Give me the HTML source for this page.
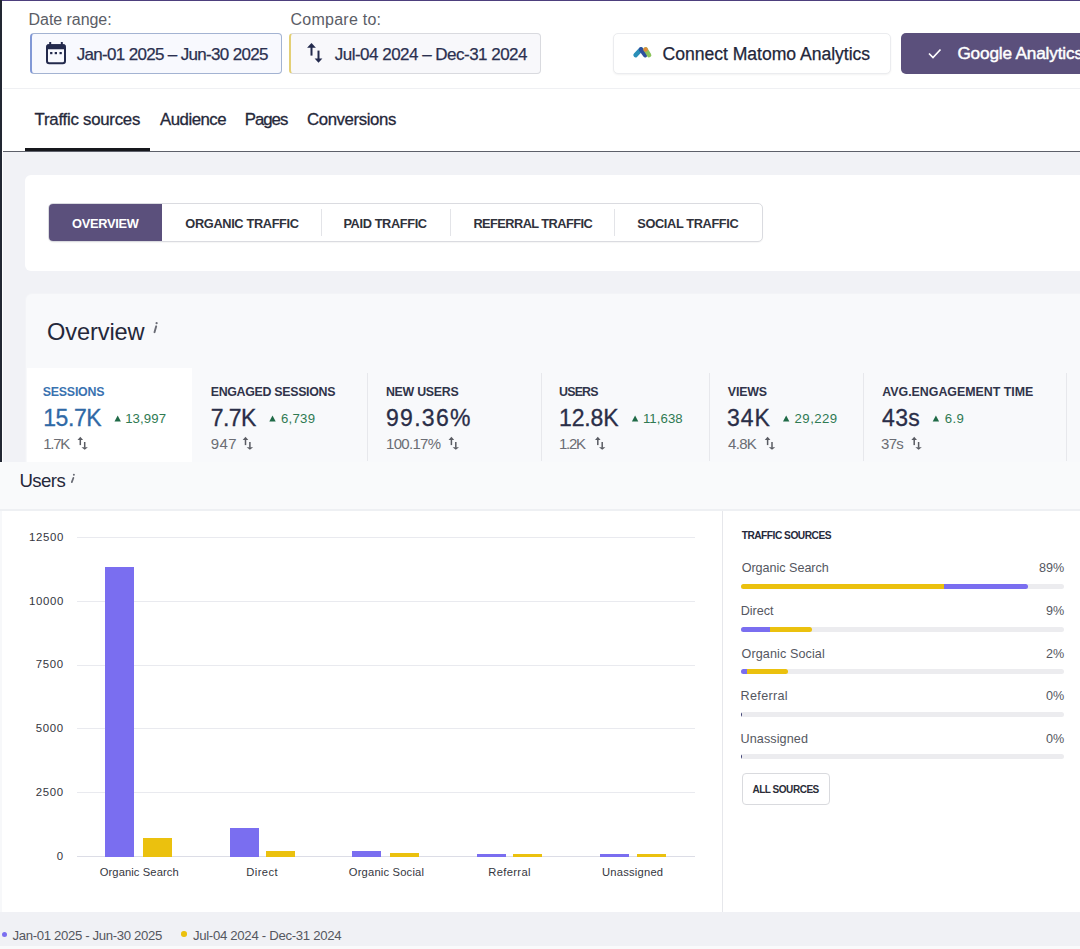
<!DOCTYPE html>
<html><head><meta charset="utf-8"><title>Traffic sources</title>
<style>
*{box-sizing:border-box;margin:0;padding:0}
html,body{width:1080px;height:949px;overflow:hidden;background:#fff;font-family:"Liberation Sans",sans-serif;position:relative}
.r{position:absolute}
.t{position:absolute;white-space:nowrap;line-height:1}
</style></head><body>
<div class="r" style="left:0px;top:0px;width:1080px;height:152px;background:#fff;"></div>
<div class="r" style="left:0px;top:0px;width:1080px;height:1px;background:#4d3f7d;"></div>
<div class="r" style="left:3px;top:88px;width:1077px;height:1px;background:#eff0f3;"></div>
<div class="t" style="left:28.6px;top:12.0px;font-size:16px;letter-spacing:-0.06px;color:#5b5d66">Date range:</div>
<div class="t" style="left:290.5px;top:12.0px;font-size:16px;letter-spacing:0.25px;color:#5b5d66">Compare to:</div>
<div class="r" style="left:30px;top:33px;width:252px;height:41px;border:1.5px solid #a3b3d2;border-left:2px solid #8299d6;border-radius:4px;background:#f8f9fe"></div>
<div class="r" style="left:289px;top:33px;width:252px;height:41px;border:1.5px solid #d9dadf;border-left:2px solid #e3cf75;border-radius:4px;background:#f8f8fb"></div>
<svg class="r" style="left:0;top:0" width="1080" height="100" viewBox="0 0 1080 100">
<rect x="47" y="45.2" width="18" height="18" rx="2.2" fill="none" stroke="#232a4d" stroke-width="2"/>
<rect x="46.5" y="44.2" width="19" height="5" rx="1.5" fill="#232a4d"/>
<rect x="49.2" y="42" width="2" height="3" fill="#232a4d"/><rect x="60.8" y="42" width="2" height="3" fill="#232a4d"/>
<rect x="50.1" y="52" width="2.3" height="2.2" fill="#232a4d"/><rect x="54.7" y="52" width="2.3" height="2.2" fill="#232a4d"/><rect x="59.5" y="52" width="2.3" height="2.2" fill="#232a4d"/>
<path d="M311.5 55.6V47" stroke="#232a4d" stroke-width="2"/><path d="M307.1 47.7L311.5 43.1L315.9 47.7Z" fill="#232a4d"/>
<path d="M318.5 50.6V59" stroke="#232a4d" stroke-width="2"/><path d="M314.6 58.4L318.5 62.8L322.4 58.4Z" fill="#232a4d"/>
<path d="M635.6 55.1L641 49.4" stroke="#2a8fb8" stroke-width="4.5" stroke-linecap="round"/>
<path d="M641 49.4L645.2 55.1" stroke="#2d4f9e" stroke-width="4.5" stroke-linecap="round"/>
<path d="M645.6 49.4L649.1 55.1" stroke="#8bc35a" stroke-width="4.5" stroke-linecap="round"/>
<circle cx="645.6" cy="49.5" r="2.25" fill="#e08a3a"/>
<path d="M929 53.5L933 57.5L940.5 49.5" fill="none" stroke="#fff" stroke-width="1.7"/>
</svg>
<div class="t" style="left:76.7px;top:46.0px;font-size:17px;letter-spacing:-0.675px;color:#2b3050;-webkit-text-stroke:0.25px #2b3050">Jan-01 2025 – Jun-30 2025</div>
<div class="t" style="left:334.8px;top:46.0px;font-size:17px;letter-spacing:-0.517px;color:#2b3050;-webkit-text-stroke:0.25px #2b3050">Jul-04 2024 – Dec-31 2024</div>
<div class="r" style="left:613px;top:33px;width:278px;height:41px;border:1px solid #ebecef;border-radius:5px;background:#fff;box-shadow:0 1px 2px rgba(0,0,0,.05)"></div>
<div class="r" style="left:901px;top:33px;width:200px;height:41px;background:#5b507c;border-radius:5px"></div>
<svg class="r" style="left:0;top:0" width="1080" height="100" viewBox="0 0 1080 100">
<path d="M635.6 55.1L641 49.4" stroke="#2a8fb8" stroke-width="4.5" stroke-linecap="round"/>
<path d="M641 49.4L645.2 55.1" stroke="#2d4f9e" stroke-width="4.5" stroke-linecap="round"/>
<path d="M645.6 49.4L649.1 55.1" stroke="#8bc35a" stroke-width="4.5" stroke-linecap="round"/>
<circle cx="645.6" cy="49.5" r="2.25" fill="#e08a3a"/>
<path d="M929 53.5L933 57.5L940.5 49.5" fill="none" stroke="#fff" stroke-width="1.7"/>
</svg>
<div class="t" style="left:662.5px;top:46.0px;font-size:17.6px;letter-spacing:-0.03px;color:#23263a;-webkit-text-stroke:0.25px #23263a">Connect Matomo Analytics</div>
<div class="t" style="left:957.4px;top:45.0px;font-size:17.2px;letter-spacing:-0.16px;color:#fff;-webkit-text-stroke:0.45px #fff">Google Analytics</div>
<div class="t" style="left:34.6px;top:112.0px;font-size:16.8px;letter-spacing:-0.243px;color:#25283a;-webkit-text-stroke:0.3px #25283a">Traffic sources</div>
<div class="t" style="left:160.1px;top:112.0px;font-size:16.8px;letter-spacing:-0.5px;color:#25283a;-webkit-text-stroke:0.3px #25283a">Audience</div>
<div class="t" style="left:244.8px;top:112.0px;font-size:16.8px;letter-spacing:-1.025px;color:#25283a;-webkit-text-stroke:0.3px #25283a">Pages</div>
<div class="t" style="left:307.0px;top:112.0px;font-size:16.8px;letter-spacing:-0.4px;color:#25283a;-webkit-text-stroke:0.3px #25283a">Conversions</div>
<div class="r" style="left:3px;top:151px;width:1077px;height:1px;background:#5d606a;"></div>
<div class="r" style="left:25px;top:148px;width:125px;height:3px;background:#17181d;"></div>
<div class="r" style="left:3px;top:152px;width:1077px;height:310px;background:#f1f2f6;"></div>
<div class="r" style="left:0px;top:0px;width:2px;height:462px;background:#222733;"></div>
<div class="r" style="left:25px;top:175px;width:1070px;height:96px;background:#fff;border-radius:6px"></div>
<div class="r" style="left:48px;top:203px;width:715px;height:39px;border:1.5px solid #dadbe0;border-radius:5px;background:#fff;box-shadow:0 1px 1px rgba(0,0,0,.04)"></div>
<div class="r" style="left:49px;top:204px;width:113px;height:37px;background:#5b507c;border-radius:4px 0 0 4px"></div>
<div class="r" style="left:320.5px;top:209px;width:1px;height:27px;background:#e3e4e8;"></div>
<div class="r" style="left:450.3px;top:209px;width:1px;height:27px;background:#e3e4e8;"></div>
<div class="r" style="left:614px;top:209px;width:1px;height:27px;background:#e3e4e8;"></div>
<div class="t" style="left:72.0px;top:218.0px;font-size:12.8px;letter-spacing:-0.257px;color:#fff;font-weight:bold">OVERVIEW</div>
<div class="t" style="left:185.3px;top:218.0px;font-size:12.8px;letter-spacing:-0.357px;color:#30323c;font-weight:bold">ORGANIC TRAFFIC</div>
<div class="t" style="left:343.4px;top:218.0px;font-size:12.8px;letter-spacing:-0.382px;color:#30323c;font-weight:bold">PAID TRAFFIC</div>
<div class="t" style="left:473.4px;top:218.0px;font-size:12.8px;letter-spacing:-0.56px;color:#30323c;font-weight:bold">REFERRAL TRAFFIC</div>
<div class="t" style="left:637.3px;top:218.0px;font-size:12.8px;letter-spacing:-0.385px;color:#30323c;font-weight:bold">SOCIAL TRAFFIC</div>
<div class="r" style="left:25.5px;top:294px;width:1060px;height:168px;background:#f8f9fb;border-radius:6px 0 0 0;box-shadow:0 0 0 1px #f3f4f7"></div>
<div class="t" style="left:47.0px;top:321.0px;font-size:23.6px;letter-spacing:-0.1px;color:#25283a">Overview</div>
<svg class="r" style="left:140px;top:315px" width="30" height="25" viewBox="140 315 30 25"><circle cx="156.6" cy="323.2" r="1.1" fill="#6a6c75"/><path d="M156.2 326.3L154.5 332.2" stroke="#6a6c75" stroke-width="1.9" stroke-linecap="round"/></svg>
<div class="r" style="left:26.5px;top:368px;width:165.5px;height:94px;background:#fff;"></div>
<div class="r" style="left:367px;top:373px;width:1px;height:88px;background:#e7e8ec;"></div>
<div class="r" style="left:541px;top:373px;width:1px;height:88px;background:#e7e8ec;"></div>
<div class="r" style="left:708.5px;top:373px;width:1px;height:88px;background:#e7e8ec;"></div>
<div class="r" style="left:863.3px;top:373px;width:1px;height:88px;background:#e7e8ec;"></div>
<div class="r" style="left:1066.4px;top:373px;width:1px;height:88px;background:#e7e8ec;"></div>
<div class="t" style="left:42.8px;top:386.0px;font-size:12.4px;letter-spacing:-0.243px;color:#3a72b0;font-weight:bold">SESSIONS</div>
<div class="t" style="left:43.2px;top:407.0px;font-size:23px;letter-spacing:-0.425px;color:#2f69a6;-webkit-text-stroke:0.3px #2f69a6">15.7K</div>
<div class="t" style="left:125.2px;top:412.0px;font-size:13.2px;letter-spacing:0.1px;color:#2f7a52">13,997</div>
<div class="t" style="left:43.2px;top:436.0px;font-size:15px;letter-spacing:-1.267px;color:#6b6d74">1.7K</div>
<div class="t" style="left:210.7px;top:386.0px;font-size:12.4px;letter-spacing:-0.313px;color:#30344a;font-weight:bold">ENGAGED SESSIONS</div>
<div class="t" style="left:210.7px;top:407.0px;font-size:23px;letter-spacing:-0.567px;color:#2a2e48;-webkit-text-stroke:0.3px #2a2e48">7.7K</div>
<div class="t" style="left:281.0px;top:412.0px;font-size:13.2px;letter-spacing:0.25px;color:#2f7a52">6,739</div>
<div class="t" style="left:210.7px;top:436.0px;font-size:15px;letter-spacing:0.5px;color:#6b6d74">947</div>
<div class="t" style="left:385.9px;top:386.0px;font-size:12.4px;letter-spacing:-0.275px;color:#30344a;font-weight:bold">NEW USERS</div>
<div class="t" style="left:386.0px;top:407.0px;font-size:23px;letter-spacing:1.28px;color:#2a2e48;-webkit-text-stroke:0.3px #2a2e48">99.36%</div>
<div class="t" style="left:386.0px;top:436.0px;font-size:15px;letter-spacing:-0.7px;color:#6b6d74">100.17%</div>
<div class="t" style="left:559.1px;top:386.0px;font-size:12.4px;letter-spacing:-0.825px;color:#30344a;font-weight:bold">USERS</div>
<div class="t" style="left:559.0px;top:407.0px;font-size:23px;letter-spacing:-0.15px;color:#2a2e48;-webkit-text-stroke:0.3px #2a2e48">12.8K</div>
<div class="t" style="left:642.9px;top:412.0px;font-size:13.2px;letter-spacing:0.08px;color:#2f7a52">11,638</div>
<div class="t" style="left:559.0px;top:436.0px;font-size:15px;letter-spacing:-1.267px;color:#6b6d74">1.2K</div>
<div class="t" style="left:727.8px;top:386.0px;font-size:12.4px;letter-spacing:-0.15px;color:#30344a;font-weight:bold">VIEWS</div>
<div class="t" style="left:727.0px;top:407.0px;font-size:23px;letter-spacing:1.0px;color:#2a2e48;-webkit-text-stroke:0.3px #2a2e48">34K</div>
<div class="t" style="left:794.6px;top:412.0px;font-size:13.2px;letter-spacing:0.44px;color:#2f7a52">29,229</div>
<div class="t" style="left:728.0px;top:436.0px;font-size:15px;letter-spacing:-0.667px;color:#6b6d74">4.8K</div>
<div class="t" style="left:882.3px;top:386.0px;font-size:12.4px;letter-spacing:-0.017px;color:#30344a;font-weight:bold">AVG.ENGAGEMENT TIME</div>
<div class="t" style="left:882.0px;top:407.0px;font-size:23px;letter-spacing:0.35px;color:#2a2e48;-webkit-text-stroke:0.3px #2a2e48">43s</div>
<div class="t" style="left:944.7px;top:412.0px;font-size:13.2px;letter-spacing:0.4px;color:#2f7a52">6.9</div>
<div class="t" style="left:881.0px;top:436.0px;font-size:15px;letter-spacing:-0.7px;color:#6b6d74">37s</div>
<svg class="r" style="left:0;top:360px" width="1080" height="100" viewBox="0 360 1080 100"><path d="M114.5 421.6L117.7 415.6L120.9 421.6Z" fill="#1f6a47"/><path d="M269.3 421.6L272.5 415.6L275.7 421.6Z" fill="#1f6a47"/><path d="M631.9 421.6L635.1 415.6L638.3 421.6Z" fill="#1f6a47"/><path d="M783 421.6L786.2 415.6L789.4 421.6Z" fill="#1f6a47"/><path d="M932.7 421.6L935.9000000000001 415.6L939.1 421.6Z" fill="#1f6a47"/><path d="M77.5 439.9L80.3 436.8L83.1 439.9Z" fill="#5a5c63"/><rect x="79.55" y="439.5" width="1.5" height="5.6" fill="#5a5c63"/><rect x="83.95" y="442" width="1.5" height="5.6" fill="#5a5c63"/><path d="M81.5 447.2L84.7 449.7L87.9 447.2Z" fill="#5a5c63"/><path d="M242.7 439.9L245.5 436.8L248.29999999999998 439.9Z" fill="#5a5c63"/><rect x="244.75" y="439.5" width="1.5" height="5.6" fill="#5a5c63"/><rect x="249.14999999999998" y="442" width="1.5" height="5.6" fill="#5a5c63"/><path d="M246.7 447.2L249.89999999999998 449.7L253.1 447.2Z" fill="#5a5c63"/><path d="M448.6 439.9L451.40000000000003 436.8L454.20000000000005 439.9Z" fill="#5a5c63"/><rect x="450.65000000000003" y="439.5" width="1.5" height="5.6" fill="#5a5c63"/><rect x="455.05" y="442" width="1.5" height="5.6" fill="#5a5c63"/><path d="M452.6 447.2L455.8 449.7L459.0 447.2Z" fill="#5a5c63"/><path d="M595 439.9L597.8 436.8L600.6 439.9Z" fill="#5a5c63"/><rect x="597.05" y="439.5" width="1.5" height="5.6" fill="#5a5c63"/><rect x="601.45" y="442" width="1.5" height="5.6" fill="#5a5c63"/><path d="M599 447.2L602.2 449.7L605.4 447.2Z" fill="#5a5c63"/><path d="M764.8 439.9L767.5999999999999 436.8L770.4 439.9Z" fill="#5a5c63"/><rect x="766.8499999999999" y="439.5" width="1.5" height="5.6" fill="#5a5c63"/><rect x="771.25" y="442" width="1.5" height="5.6" fill="#5a5c63"/><path d="M768.8 447.2L772.0 449.7L775.1999999999999 447.2Z" fill="#5a5c63"/><path d="M911.4 439.9L914.1999999999999 436.8L917.0 439.9Z" fill="#5a5c63"/><rect x="913.4499999999999" y="439.5" width="1.5" height="5.6" fill="#5a5c63"/><rect x="917.85" y="442" width="1.5" height="5.6" fill="#5a5c63"/><path d="M915.4 447.2L918.6 449.7L921.8 447.2Z" fill="#5a5c63"/></svg>
<div class="r" style="left:0px;top:462px;width:1080px;height:47px;background:#f9fafb;"></div>
<div class="r" style="left:0px;top:509px;width:1080px;height:2px;background:#eef0f3;"></div>
<div class="t" style="left:19.4px;top:472.0px;font-size:18.6px;letter-spacing:-0.55px;color:#25283a">Users</div>
<svg class="r" style="left:60px;top:465px" width="25" height="25" viewBox="60 465 25 25"><circle cx="73.9" cy="474.8" r="1" fill="#6a6c75"/><path d="M73.4 477.9L71.8 482.1" stroke="#6a6c75" stroke-width="1.7" stroke-linecap="round"/></svg>
<div class="r" style="left:0px;top:511px;width:1080px;height:401px;background:#f7f8fa;"></div>
<div class="r" style="left:2px;top:511px;width:720px;height:401px;background:#fff;"></div>
<div class="r" style="left:723px;top:511px;width:357px;height:401px;background:#fff;"></div>
<div class="r" style="left:722px;top:511px;width:1px;height:401px;background:#e6e7eb;"></div>
<div class="r" style="left:77px;top:537px;width:618px;height:1px;background:#e9eaef;"></div>
<div class="r" style="left:77px;top:601px;width:618px;height:1px;background:#e9eaef;"></div>
<div class="r" style="left:77px;top:665px;width:618px;height:1px;background:#e9eaef;"></div>
<div class="r" style="left:77px;top:728px;width:618px;height:1px;background:#e9eaef;"></div>
<div class="r" style="left:77px;top:792px;width:618px;height:1px;background:#e9eaef;"></div>
<div class="r" style="left:77px;top:856px;width:618px;height:1px;background:#dcdde6;"></div>
<div class="t" style="left:29.0px;top:532.0px;font-size:11.4px;letter-spacing:0.675px;color:#34363e">12500</div>
<div class="t" style="left:29.0px;top:596.0px;font-size:11.4px;letter-spacing:0.675px;color:#34363e">10000</div>
<div class="t" style="left:35.7px;top:659.0px;font-size:11.4px;letter-spacing:0.675px;color:#34363e">7500</div>
<div class="t" style="left:35.7px;top:723.0px;font-size:11.4px;letter-spacing:0.675px;color:#34363e">5000</div>
<div class="t" style="left:35.7px;top:787.0px;font-size:11.4px;letter-spacing:0.675px;color:#34363e">2500</div>
<div class="t" style="left:56.7px;top:851.0px;font-size:11.4px;letter-spacing:0.675px;color:#34363e">0</div>
<div class="r" style="left:105.2px;top:567.4px;width:29px;height:289.2px;background:#7a6ef0;"></div>
<div class="r" style="left:142.9px;top:838.3px;width:29px;height:18.3px;background:#ebc10e;"></div>
<div class="r" style="left:229.7px;top:828px;width:29px;height:28.6px;background:#7a6ef0;"></div>
<div class="r" style="left:265.8px;top:851px;width:29px;height:5.6px;background:#ebc10e;"></div>
<div class="r" style="left:352.3px;top:851px;width:29px;height:5.6px;background:#7a6ef0;"></div>
<div class="r" style="left:390px;top:852.7px;width:29px;height:3.9px;background:#ebc10e;"></div>
<div class="r" style="left:476.6px;top:854.4px;width:29px;height:2.2px;background:#7a6ef0;"></div>
<div class="r" style="left:513.3px;top:854.4px;width:29px;height:2.2px;background:#ebc10e;"></div>
<div class="r" style="left:600px;top:854.4px;width:29px;height:2.2px;background:#7a6ef0;"></div>
<div class="r" style="left:637px;top:854.4px;width:29px;height:2.2px;background:#ebc10e;"></div>
<div class="t" style="left:99.7px;top:867.0px;font-size:11.2px;letter-spacing:0.1px;color:#34363e">Organic Search</div>
<div class="t" style="left:246.3px;top:867.0px;font-size:11.2px;letter-spacing:0.42px;color:#34363e">Direct</div>
<div class="t" style="left:348.8px;top:867.0px;font-size:11.2px;letter-spacing:0.185px;color:#34363e">Organic Social</div>
<div class="t" style="left:488.3px;top:867.0px;font-size:11.2px;letter-spacing:0.343px;color:#34363e">Referral</div>
<div class="t" style="left:602.0px;top:867.0px;font-size:11.2px;letter-spacing:0.222px;color:#34363e">Unassigned</div>
<div class="t" style="left:741.7px;top:531.0px;font-size:10.2px;letter-spacing:-0.5px;color:#25283a;font-weight:bold">TRAFFIC SOURCES</div>
<div class="t" style="left:741.7px;top:562.0px;font-size:12.6px;letter-spacing:-0.031px;color:#55575f">Organic Search</div>
<div class="t" style="left:1039.0px;top:562.0px;font-size:12.6px;letter-spacing:0.0px;color:#55575f">89%</div>
<div class="r" style="left:741px;top:584px;width:323px;height:4.5px;border-radius:2.5px;background:#ececef;overflow:hidden"><div class="r" style="left:0px;top:0;width:203px;height:4.5px;background:#ebc10e;"></div><div class="r" style="left:203px;top:0;width:83.5px;height:4.5px;background:#7a6ef0;border-radius:0 2.5px 2.5px 0"></div></div>
<div class="t" style="left:740.7px;top:605.0px;font-size:12.6px;letter-spacing:0.0px;color:#55575f">Direct</div>
<div class="t" style="left:1046.0px;top:605.0px;font-size:12.6px;letter-spacing:0.0px;color:#55575f">9%</div>
<div class="r" style="left:741px;top:627px;width:323px;height:4.5px;border-radius:2.5px;background:#ececef;overflow:hidden"><div class="r" style="left:0px;top:0;width:29px;height:4.5px;background:#7a6ef0;"></div><div class="r" style="left:29px;top:0;width:42px;height:4.5px;background:#ebc10e;border-radius:0 2.5px 2.5px 0"></div></div>
<div class="t" style="left:741.6px;top:648.0px;font-size:12.6px;letter-spacing:0.092px;color:#55575f">Organic Social</div>
<div class="t" style="left:1046.0px;top:648.0px;font-size:12.6px;letter-spacing:0.0px;color:#55575f">2%</div>
<div class="r" style="left:741px;top:669px;width:323px;height:4.5px;border-radius:2.5px;background:#ececef;overflow:hidden"><div class="r" style="left:0px;top:0;width:5.5px;height:4.5px;background:#7a6ef0;"></div><div class="r" style="left:5.5px;top:0;width:41.0px;height:4.5px;background:#ebc10e;border-radius:0 2.5px 2.5px 0"></div></div>
<div class="t" style="left:740.6px;top:690.0px;font-size:12.6px;letter-spacing:0.314px;color:#55575f">Referral</div>
<div class="t" style="left:1046.0px;top:690.0px;font-size:12.6px;letter-spacing:0.0px;color:#55575f">0%</div>
<div class="r" style="left:741px;top:712.2px;width:323px;height:4.5px;border-radius:2.5px;background:#ececef;overflow:hidden"><div class="r" style="left:0px;top:0;width:1.2000000000000455px;height:4.5px;background:#3f4175;"></div></div>
<div class="t" style="left:740.6px;top:733.0px;font-size:12.6px;letter-spacing:0.089px;color:#55575f">Unassigned</div>
<div class="t" style="left:1046.0px;top:733.0px;font-size:12.6px;letter-spacing:0.0px;color:#55575f">0%</div>
<div class="r" style="left:741px;top:754px;width:323px;height:4.5px;border-radius:2.5px;background:#ececef;overflow:hidden"><div class="r" style="left:0px;top:0;width:1.2000000000000455px;height:4.5px;background:#3f4175;"></div></div>
<div class="r" style="left:741.5px;top:773px;width:88px;height:32px;border:1.2px solid #d9dade;border-radius:4px;background:#fff"></div>
<div class="t" style="left:752.4px;top:785.0px;font-size:10px;letter-spacing:-0.46px;color:#2b2d38;font-weight:bold">ALL SOURCES</div>
<div class="r" style="left:0px;top:912px;width:1080px;height:34px;background:#f0f1f5;"></div>
<div class="r" style="left:0px;top:946px;width:1080px;height:3px;background:#f9fafb;"></div>
<div class="r" style="left:2.2px;top:931.8px;width:5px;height:5px;background:#7a6ef0;border-radius:50%"></div>
<div class="r" style="left:181px;top:931.4px;width:5.5px;height:5.5px;background:#ebc10e;border-radius:50%"></div>
<div class="t" style="left:12.6px;top:929.0px;font-size:13.2px;letter-spacing:-0.358px;color:#55575f">Jan-01 2025 - Jun-30 2025</div>
<div class="t" style="left:192.9px;top:929.0px;font-size:13.2px;letter-spacing:-0.308px;color:#55575f">Jul-04 2024 - Dec-31 2024</div>
</body></html>
